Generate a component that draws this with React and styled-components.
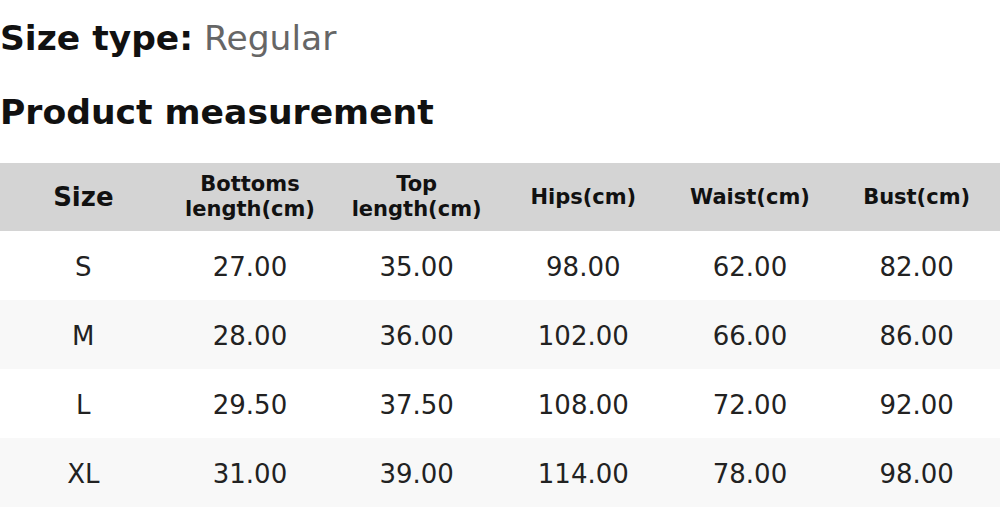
import styled, { createGlobalStyle } from "styled-components";

const GlobalStyle = createGlobalStyle`
    html, body {
        margin: 0;
        padding: 0;
        background: #fff;
    }
    body {
        font-family: "DejaVu Sans", Verdana, sans-serif;
        color: #111;
    }
`;

const Page = styled.div`
    width: 1000px;
`;

const SizeType = styled.p`
    margin: 0;
    padding-top: 17px;
    font-size: 34.5px;
    line-height: 42px;
`;

const Label = styled.span`
    font-weight: bold;
`;

const Value = styled.span`
    color: #666;
`;

const Heading = styled.h2`
    margin: 0;
    padding-top: 32px;
    font-size: 34.6px;
    line-height: 42px;
    font-weight: bold;
`;

const Table = styled.table`
    margin-top: 30px;
    width: 100%;
    border-collapse: collapse;
    table-layout: fixed;
`;

const HeadRow = styled.tr`
    background-color: #d4d4d4;
    height: 68px;
`;

const Th = styled.th`
    font-size: ${(p) => (p.$big ? "26px" : "21px")};
    line-height: 25px;
    font-weight: bold;
    color: #111;
    text-align: center;
    padding: 0;
`;

const Row = styled.tr`
    height: 69px;
    background-color: ${(p) => (p.$striped ? "#f8f8f8" : "#fff")};
`;

const Td = styled.td`
    font-size: 26px;
    color: #222;
    text-align: center;
    padding: 2px 0 0;
`;

const rows = [
    ["S", "27.00", "35.00", "98.00", "62.00", "82.00"],
    ["M", "28.00", "36.00", "102.00", "66.00", "86.00"],
    ["L", "29.50", "37.50", "108.00", "72.00", "92.00"],
    ["XL", "31.00", "39.00", "114.00", "78.00", "98.00"],
];

function App() {
    return (
        <Page>
            <GlobalStyle />
            <SizeType>
                <Label>Size type:</Label> <Value>Regular</Value>
            </SizeType>
            <Heading>Product measurement</Heading>
            <Table>
                <thead>
                    <HeadRow>
                        <Th $big>Size</Th>
                        <Th>
                            Bottoms
                            <br />
                            length(cm)
                        </Th>
                        <Th>
                            Top
                            <br />
                            length(cm)
                        </Th>
                        <Th>Hips(cm)</Th>
                        <Th>Waist(cm)</Th>
                        <Th>Bust(cm)</Th>
                    </HeadRow>
                </thead>
                <tbody>
                    {rows.map((r, i) => (
                        <Row key={r[0]} $striped={i % 2 === 1}>
                            {r.map((c, j) => (
                                <Td key={j}>{c}</Td>
                            ))}
                        </Row>
                    ))}
                </tbody>
            </Table>
        </Page>
    );
}

export default App;
